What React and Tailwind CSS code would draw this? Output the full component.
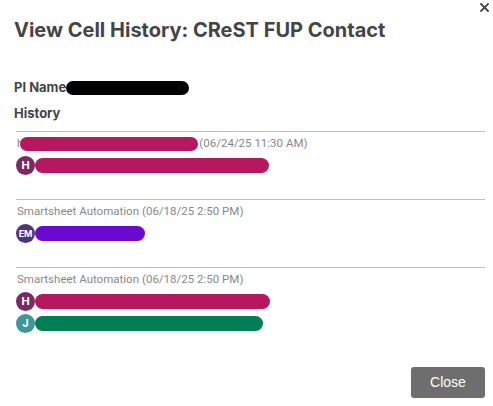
const entries = [
  {
    by: 'h',
    byRedact: 'w-[178px]',
    date: '(06/24/25 11:30 AM)',
    rows: [{ initials: 'H', avatar: 'bg-[#7a2a62]', bar: 'bg-[#b5185f] w-[234px]' }],
  },
  {
    by: 'Smartsheet Automation',
    date: '(06/18/25 2:50 PM)',
    rows: [{ initials: 'EM', avatar: 'bg-[#553179]', bar: 'bg-[#6a0ad0] w-[110px]' }],
  },
  {
    by: 'Smartsheet Automation',
    date: '(06/18/25 2:50 PM)',
    rows: [
      { initials: 'H', avatar: 'bg-[#7a2a62]', bar: 'bg-[#b5185f] w-[235px]' },
      { initials: 'J', avatar: 'bg-[#3f9797]', bar: 'bg-[#007f55] w-[228px]' },
    ],
  },
];

const App = () => {
  return (
    <div className="relative w-[493px] h-[406px] bg-white font-['Inter',sans-serif] text-[#444]">
      <button className="absolute right-[4px] top-[3px] text-[#444]" aria-label="close">
        <svg width="9" height="9" viewBox="0 0 9 9" stroke="currentColor" strokeWidth="1.8" strokeLinecap="square">
          <path d="M1 1L8 8M8 1L1 8" />
        </svg>
      </button>

      <div className="px-[14px] pt-[17px]">
        <h1 className="text-[20px] font-bold leading-[26px] text-[#454545]">View Cell History: CReST FUP Contact</h1>

        <div className="mt-[35px] flex items-center text-[13px] font-bold">
          <span>PI Name:</span>
          <span className="ml-[-5px] h-[14px] w-[123px] rounded-full bg-black" />
        </div>
        <div className="mt-[6px] text-[13px] font-bold">History</div>

        <div className="mt-[8px] ml-[2px] mr-[-6px]">
          {entries.map((e, i) => (
            <div key={i} className="border-t border-[#bdbdbd] h-[68px] pt-[4px]">
              <div className="flex items-center font-['Roboto',sans-serif] text-[11.5px] text-[#888] pl-[1px] h-[15px]">
                <span>{e.by}</span>
                {e.byRedact && <span className={`ml-[-3px] h-[14px] rounded-full bg-[#b5185f] ${e.byRedact}`} />}
                <span className={e.byRedact ? 'ml-[1px]' : 'ml-[3px]'}>{e.date}</span>
              </div>
              <div className="mt-[5px] flex flex-col gap-[3px]">
                {e.rows.map((r, j) => (
                  <div key={j} className="flex items-center">
                    <div
                      className={`flex h-[19px] w-[19px] shrink-0 items-center justify-center rounded-full font-bold text-white ${
                        r.initials.length > 1 ? 'text-[9px] tracking-[-0.3px]' : 'text-[11px]'
                      } ${r.avatar}`}
                    >
                      {r.initials}
                    </div>
                    <span className={`h-[15px] rounded-full ${r.bar}`} />
                  </div>
                ))}
              </div>
            </div>
          ))}
        </div>
      </div>

      <button className="absolute right-[8px] top-[367px] h-[31px] w-[74px] rounded-[3px] bg-[#6e6e6e] text-[14px] text-white font-['Liberation_Sans',sans-serif]">
        Close
      </button>
    </div>
  );
};

export default App;
